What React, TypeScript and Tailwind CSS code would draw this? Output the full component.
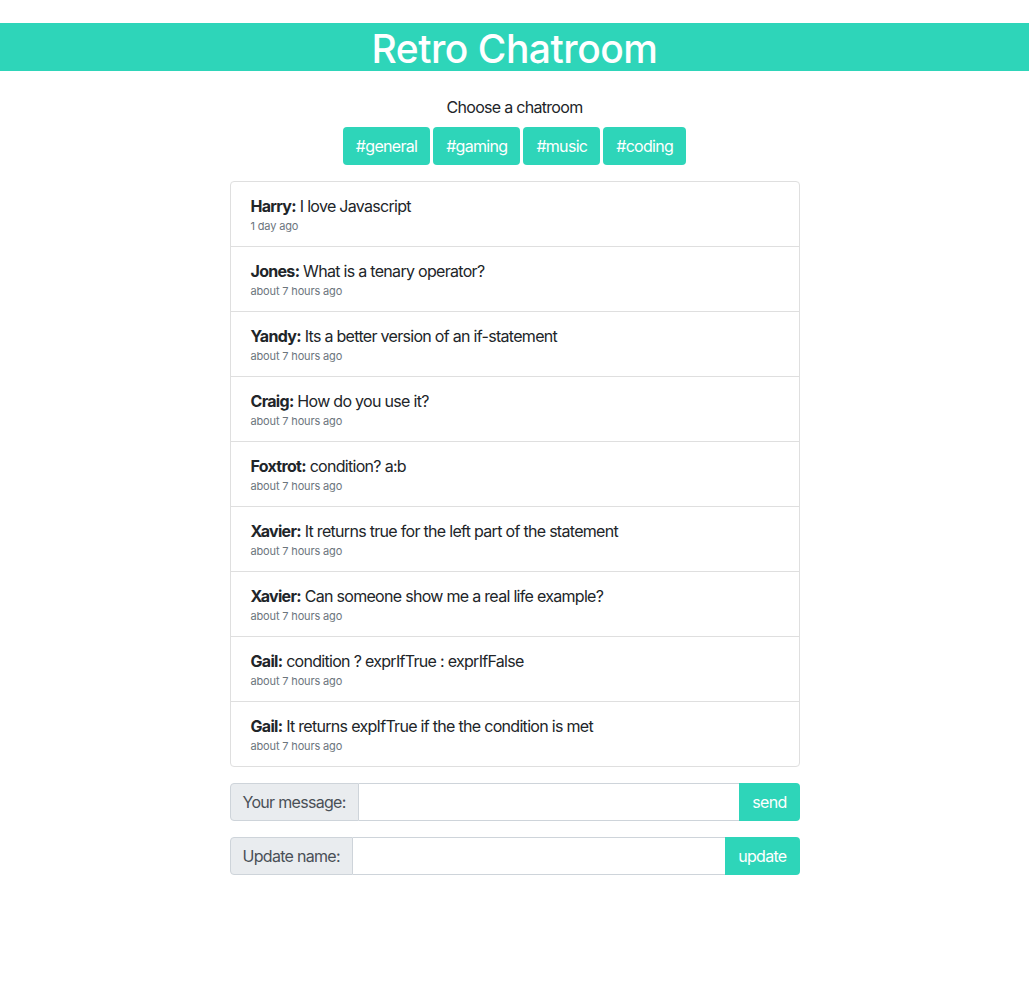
import React from "react";

const messages = [
  { name: "Harry", text: "I love Javascript", time: "1 day ago" },
  { name: "Jones", text: "What is a tenary operator?", time: "about 7 hours ago" },
  { name: "Yandy", text: "Its a better version of an if-statement", time: "about 7 hours ago" },
  { name: "Craig", text: "How do you use it?", time: "about 7 hours ago" },
  { name: "Foxtrot", text: "condition? a:b", time: "about 7 hours ago" },
  { name: "Xavier", text: "It returns true for the left part of the statement", time: "about 7 hours ago" },
  { name: "Xavier", text: "Can someone show me a real life example?", time: "about 7 hours ago" },
  { name: "Gail", text: "condition ? exprIfTrue : exprIfFalse", time: "about 7 hours ago" },
  { name: "Gail", text: "It returns expIfTrue if the the condition is met", time: "about 7 hours ago" },
];

const rooms = ["#general", "#gaming", "#music", "#coding"];

export default function App() {
  return (
    <div className="min-h-[1000px] bg-white text-[#212529]" style={{ fontFamily: "Inter, 'Noto Sans', sans-serif" }}>
      <div className="h-[23px]" />
      <div className="bg-[#2ed5b9] h-[48px] flex items-center justify-center">
        <h1 className="text-[39px] font-medium text-white leading-none tracking-[-0.5px] mt-[2px]">Retro Chatroom</h1>
      </div>
      <div className="w-[570px] mx-auto tracking-[-0.7px]">
        <p className="text-center text-[16px] leading-[24px] mt-[24px]">Choose a chatroom</p>
        <div className="flex justify-center gap-[3px] mt-[8px]">
          {rooms.map((r) => (
            <button key={r} className="bg-[#2ed5b9] text-white text-[16px] leading-[24px] px-[13px] h-[38px] rounded-[4px] tracking-[-0.7px]">
              {r}
            </button>
          ))}
        </div>
        <ul className="mt-[16px] border border-[#dfdfdf] rounded-[4px]">
          {messages.map((m, i) => (
            <li key={i} className={`px-[20px] ${i > 0 ? "h-[65px] border-t border-[#dfdfdf]" : "h-[64px]"}`}>
              <div className="pt-[12px] text-[16px] leading-[24px]">
                <span className="font-bold">{m.name}:</span> {m.text}
              </div>
              <div className="text-[11px] leading-[14px] text-[#6c757d] tracking-[-0.15px] mt-px">{m.time}</div>
            </li>
          ))}
        </ul>
        <div className="flex mt-[16px] h-[38px]">
          <span className="bg-[#e9ecef] border border-[#ced4da] rounded-l-[4px] px-[12px] flex items-center text-[16px] text-[#495057]">Your message:</span>
          <input className="flex-1 border-y border-[#ced4da] outline-none px-3" />
          <button className="bg-[#2ed5b9] text-white text-[16px] px-[13px] rounded-r-[4px] tracking-[-0.7px]">send</button>
        </div>
        <div className="flex mt-[16px] h-[38px]">
          <span className="bg-[#e9ecef] border border-[#ced4da] rounded-l-[4px] px-[12px] flex items-center text-[16px] text-[#495057]">Update name:</span>
          <input className="flex-1 border-y border-[#ced4da] outline-none px-3" />
          <button className="bg-[#2ed5b9] text-white text-[16px] px-[13px] rounded-r-[4px] tracking-[-0.7px]">update</button>
        </div>
      </div>
    </div>
  );
}
